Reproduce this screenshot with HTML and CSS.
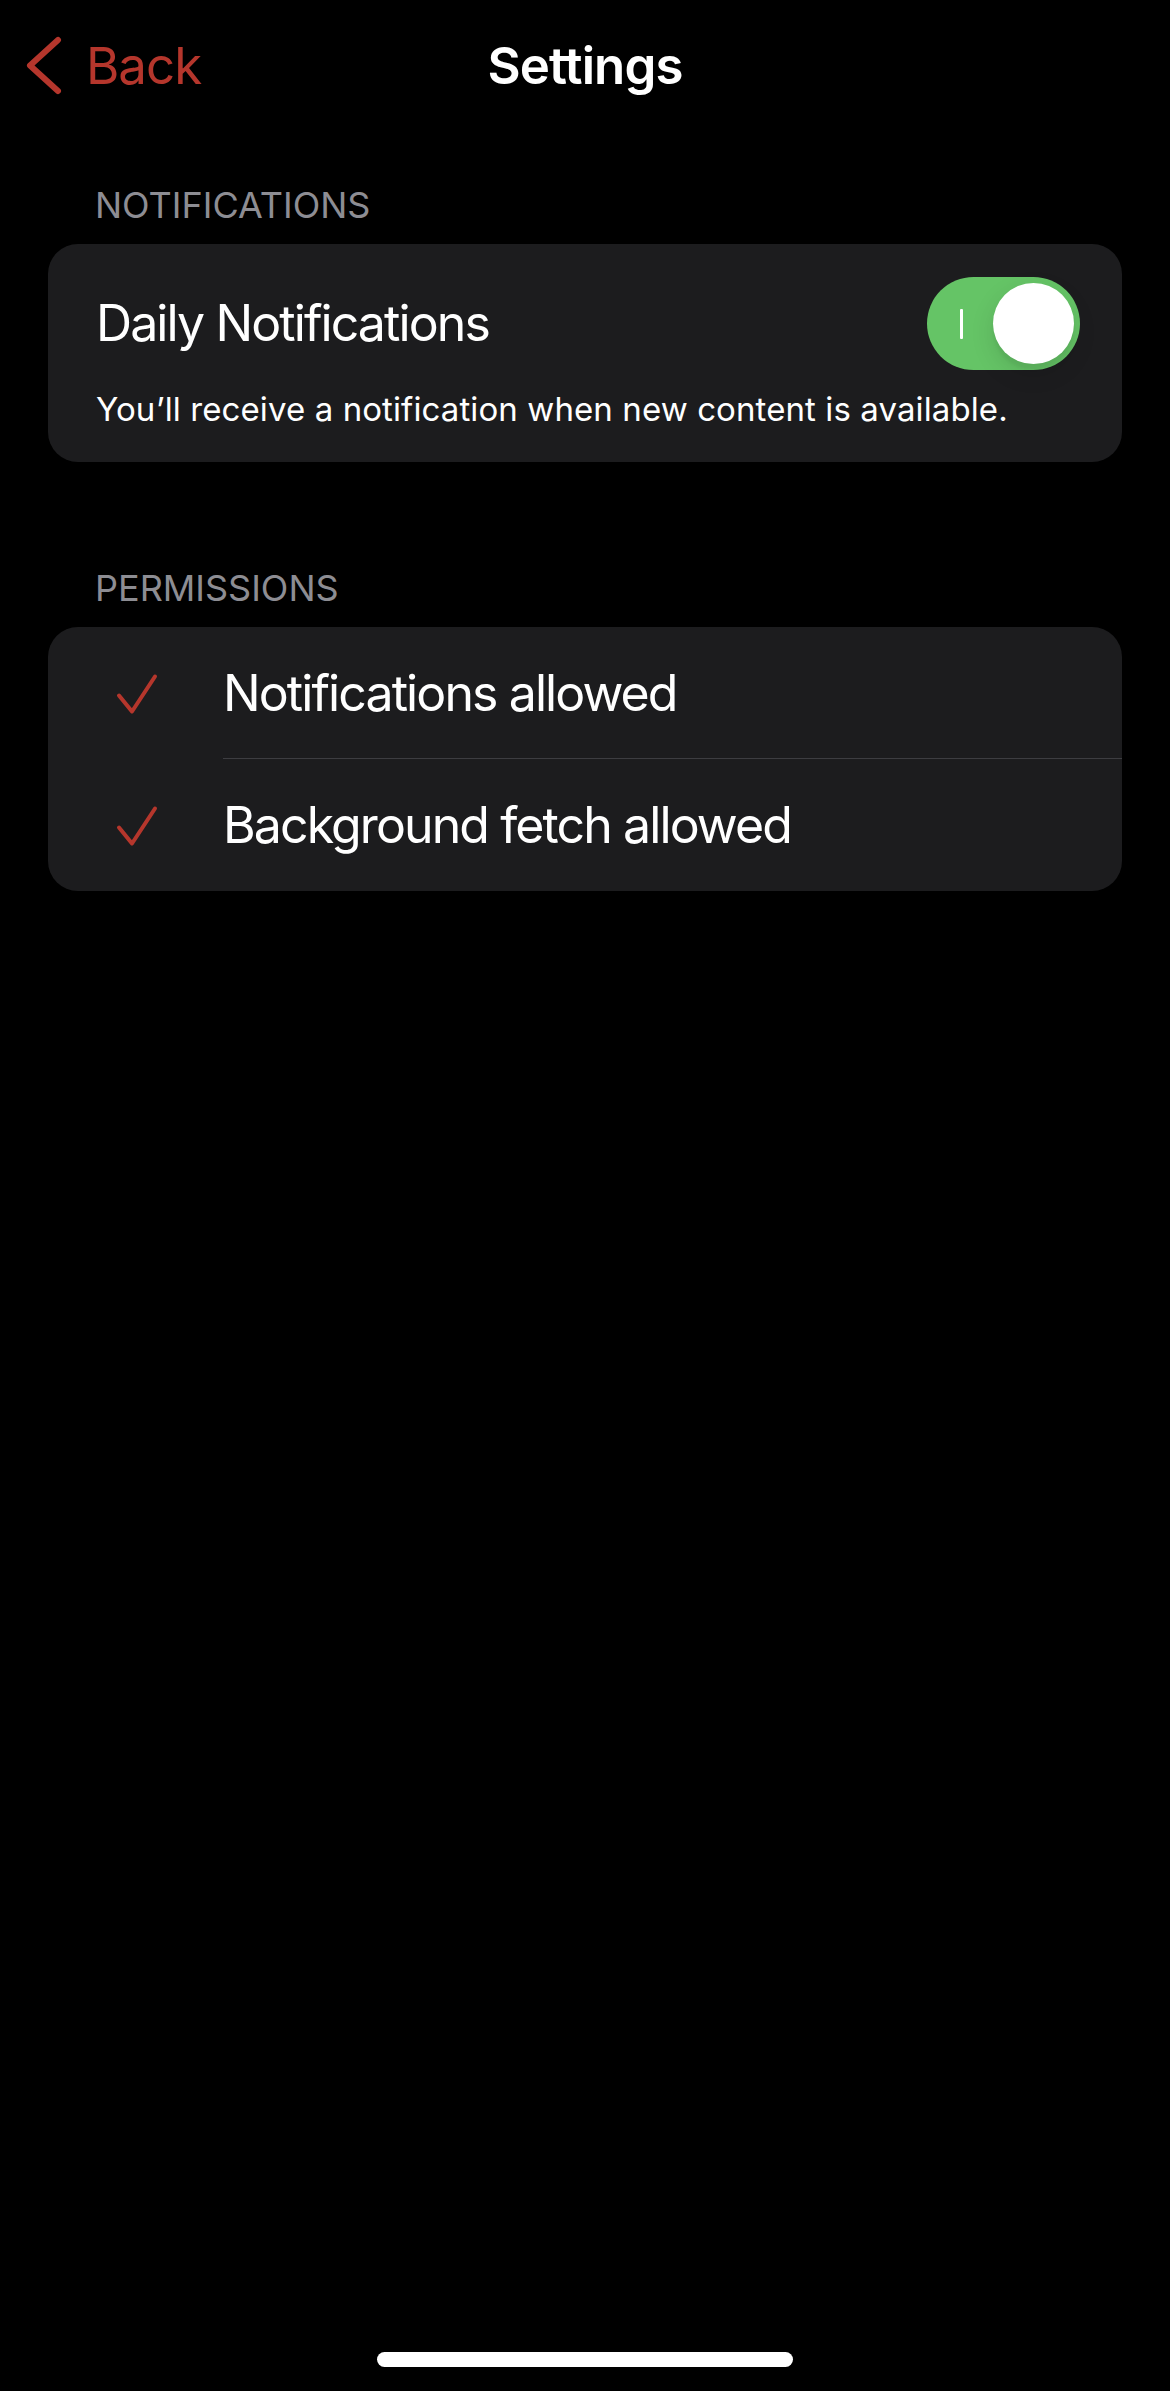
FILE: index.html
```html
<!DOCTYPE html>
<html lang="en">
<head>
<meta charset="utf-8">
<title>Settings</title>
<link rel="stylesheet" href="styles.css">
</head>
<body>
<div class="screen">
  <header class="nav">
    <a class="back" href="#">
      <svg class="back-chevron" width="40" height="60" viewBox="0 0 40 60" aria-hidden="true">
        <polyline points="33,5 5,30.5 33,56" fill="none" stroke="currentColor" stroke-width="6" stroke-linecap="round" stroke-linejoin="round"/>
      </svg>
      <span>Back</span>
    </a>
    <h1 class="nav-title">Settings</h1>
    <div class="nav-spacer"></div>
  </header>

  <section class="group">
    <h2 class="group-title">NOTIFICATIONS</h2>
    <div class="card card-notify">
      <div class="toggle-row">
        <span class="toggle-label">Daily Notifications</span>
        <span class="switch" role="switch" aria-checked="true">
          <span class="switch-mark"></span>
          <span class="switch-knob"></span>
        </span>
      </div>
      <p class="desc">You’ll receive a notification when new content is available.</p>
    </div>
  </section>

  <section class="group group-perms">
    <h2 class="group-title">PERMISSIONS</h2>
    <div class="card">
      <div class="perm-row">
        <span class="perm-icon">
          <svg width="48" height="48" viewBox="0 0 48 48" aria-hidden="true">
            <polyline points="7,26.5 20,42.5 43,7.5" fill="none" stroke="currentColor" stroke-width="4" stroke-linecap="round" stroke-linejoin="round"/>
          </svg>
        </span>
        <span class="perm-label">Notifications allowed</span>
      </div>
      <div class="perm-row">
        <span class="perm-icon">
          <svg width="48" height="48" viewBox="0 0 48 48" aria-hidden="true">
            <polyline points="7,26.5 20,42.5 43,7.5" fill="none" stroke="currentColor" stroke-width="4" stroke-linecap="round" stroke-linejoin="round"/>
          </svg>
        </span>
        <span class="perm-label">Background fetch allowed</span>
      </div>
    </div>
  </section>

  <div class="home-indicator"></div>
</div>
</body>
</html>
```

FILE: styles.css
```css
* {
  box-sizing: border-box;
}

html, body {
  margin: 0;
  padding: 0;
  background: #000;
}

body {
  font-family: Inter, "Noto Sans", "Liberation Sans", sans-serif;
  color: #fff;
  -webkit-font-smoothing: antialiased;
}

.screen {
  width: 1170px;
  min-height: 2391px;
  display: flex;
  flex-direction: column;
  background: #000;
}

/* Navigation bar */
.nav {
  height: 130px;
  display: grid;
  grid-template-columns: 1fr auto 1fr;
  align-items: center;
}

.back {
  display: flex;
  align-items: center;
  gap: 21px;
  padding-left: 25px;
  color: #b5362c;
  text-decoration: none;
  font-size: 51px;
  line-height: 61px;
  letter-spacing: -1px;
}

.back-chevron {
  display: block;
  flex: none;
}

.nav-title {
  margin: 0;
  font-size: 51px;
  line-height: 61px;
  font-weight: 600;
  letter-spacing: -0.9px;
  color: #fff;
}

/* Groups */
.group {
  margin-top: 53px;
}

.group-perms {
  margin-top: 104px;
}

.group-title {
  margin: 0 0 17px;
  padding-left: 95px;
  font-size: 36px;
  line-height: 44px;
  font-weight: 400;
  letter-spacing: 0;
  color: #8d8d93;
}

.card {
  margin: 0 48px;
  background: #1c1c1e;
  border-radius: 30px;
  overflow: hidden;
}

.card-notify {
  padding: 33px 42px 32px 48px;
}

.toggle-row {
  display: flex;
  align-items: center;
  justify-content: space-between;
}

.toggle-label {
  font-size: 50px;
  line-height: 61px;
  letter-spacing: -1.9px;
}

/* Switch */
.switch {
  position: relative;
  width: 153px;
  height: 93px;
  border-radius: 47px;
  background: #65c466;
  display: flex;
  align-items: center;
  justify-content: space-between;
  padding: 0 6px 0 33px;
  flex: none;
}

.switch-mark {
  width: 3px;
  height: 30px;
  background: #fff;
  border-radius: 1px;
}

.switch-knob {
  width: 81px;
  height: 81px;
  border-radius: 50%;
  background: #fff;
  box-shadow: 0 9px 24px rgba(0, 0, 0, 0.12), 0 6px 3px rgba(0, 0, 0, 0.04);
}

.desc {
  margin: 19px 0 0;
  font-size: 33px;
  line-height: 41px;
  letter-spacing: 0.1px;
  color: #fff;
}

/* Permission rows */
.perm-row {
  display: flex;
  align-items: stretch;
}

.perm-icon {
  width: 175px;
  flex: none;
  display: flex;
  align-items: center;
  justify-content: center;
  color: #b5362c;
}

.perm-icon svg {
  display: block;
}

.perm-label {
  flex: 1;
  height: 132px;
  display: flex;
  align-items: center;
  font-size: 50px;
  letter-spacing: -1.9px;
}

.perm-row:first-child .perm-label {
  border-bottom: 1px solid #3d3d41;
}

/* Home indicator */
.home-indicator {
  margin: auto auto 24px;
  width: 416px;
  height: 15px;
  border-radius: 8px;
  background: #fff;
}
```
